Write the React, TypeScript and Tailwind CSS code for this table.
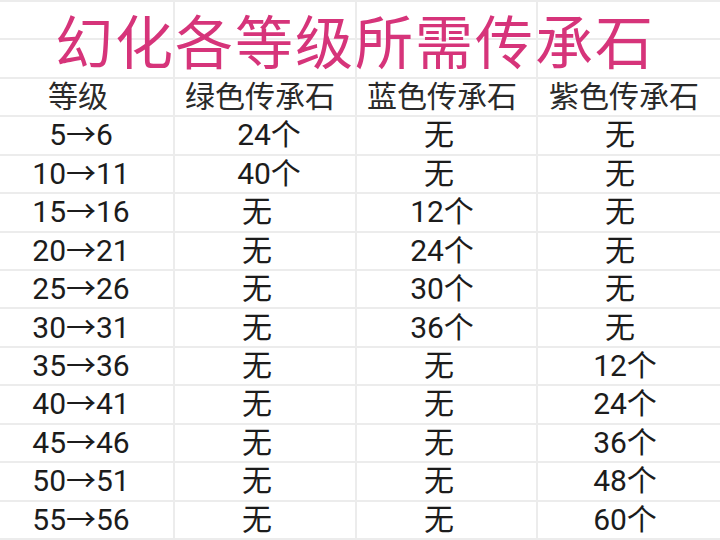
const rows: [string, string, string, string][] = [
  ["5→6", "24个", "无", "无"],
  ["10→11", "40个", "无", "无"],
  ["15→16", "无", "12个", "无"],
  ["20→21", "无", "24个", "无"],
  ["25→26", "无", "30个", "无"],
  ["30→31", "无", "36个", "无"],
  ["35→36", "无", "无", "12个"],
  ["40→41", "无", "无", "24个"],
  ["45→46", "无", "无", "36个"],
  ["50→51", "无", "无", "48个"],
  ["55→56", "无", "无", "60个"],
];

const headers = ["等级", "绿色传承石", "蓝色传承石", "紫色传承石"];

// small nudges so each cell's text sits where the screenshot has it
const headerPad = ["pr-[17px]", "pr-[10px]", "pr-[9px]", "pr-[10px]"];
const nonePad = ["pr-[11px]", "pr-[16px]", "pr-[15px]", "pr-[18px]"];
const countPad = ["pr-[11px]", "pl-[8px]", "pr-[9px]", "pr-[8px]"];

const Cell = ({
  children,
  pad,
  last,
}: {
  children?: React.ReactNode;
  pad?: string;
  last?: boolean;
}) => (
  <div
    className={`flex items-center justify-center border-b-2 border-[#ececec] ${
      last ? "" : "border-r-2"
    }`}
  >
    <span className={pad}>{children}</span>
  </div>
);

export default function App() {
  return (
    <div
      className="relative w-[720px] h-[540px] overflow-hidden bg-white text-[30px] leading-none text-[#1c1c1c]"
      style={{ fontFamily: 'Roboto, "Noto Sans CJK SC", sans-serif' }}
    >
      <div className="grid h-[540px] grid-cols-[175px_182px_181px_182px] grid-rows-[repeat(14,1fr)] border-t-2 border-[#ececec]">
        {/* two blank spreadsheet rows under the title */}
        {Array.from({ length: 8 }, (_, i) => (
          <Cell key={`b${i}`} last={i % 4 === 3} />
        ))}
        {headers.map((h, i) => (
          <Cell key={h} pad={headerPad[i]} last={i === 3}>
            <span className="text-[#2a2a2a]">{h}</span>
          </Cell>
        ))}
        {rows.map((r) =>
          r.map((v, i) => (
            <Cell
              key={`${r[0]}-${i}`}
              pad={i === 0 ? countPad[0] : v === "无" ? nonePad[i] : countPad[i]}
              last={i === 3}
            >
              {v}
            </Cell>
          ))
        )}
      </div>
      <div className="absolute left-0 right-0 top-[10px] flex justify-center pr-[10px]">
        <h1
          className="text-[58px] leading-none tracking-[2px] text-[#d6347a]"
          style={{ fontFamily: '"Noto Sans CJK SC", sans-serif' }}
        >
          幻化各等级所需传承石
        </h1>
      </div>
    </div>
  );
}
